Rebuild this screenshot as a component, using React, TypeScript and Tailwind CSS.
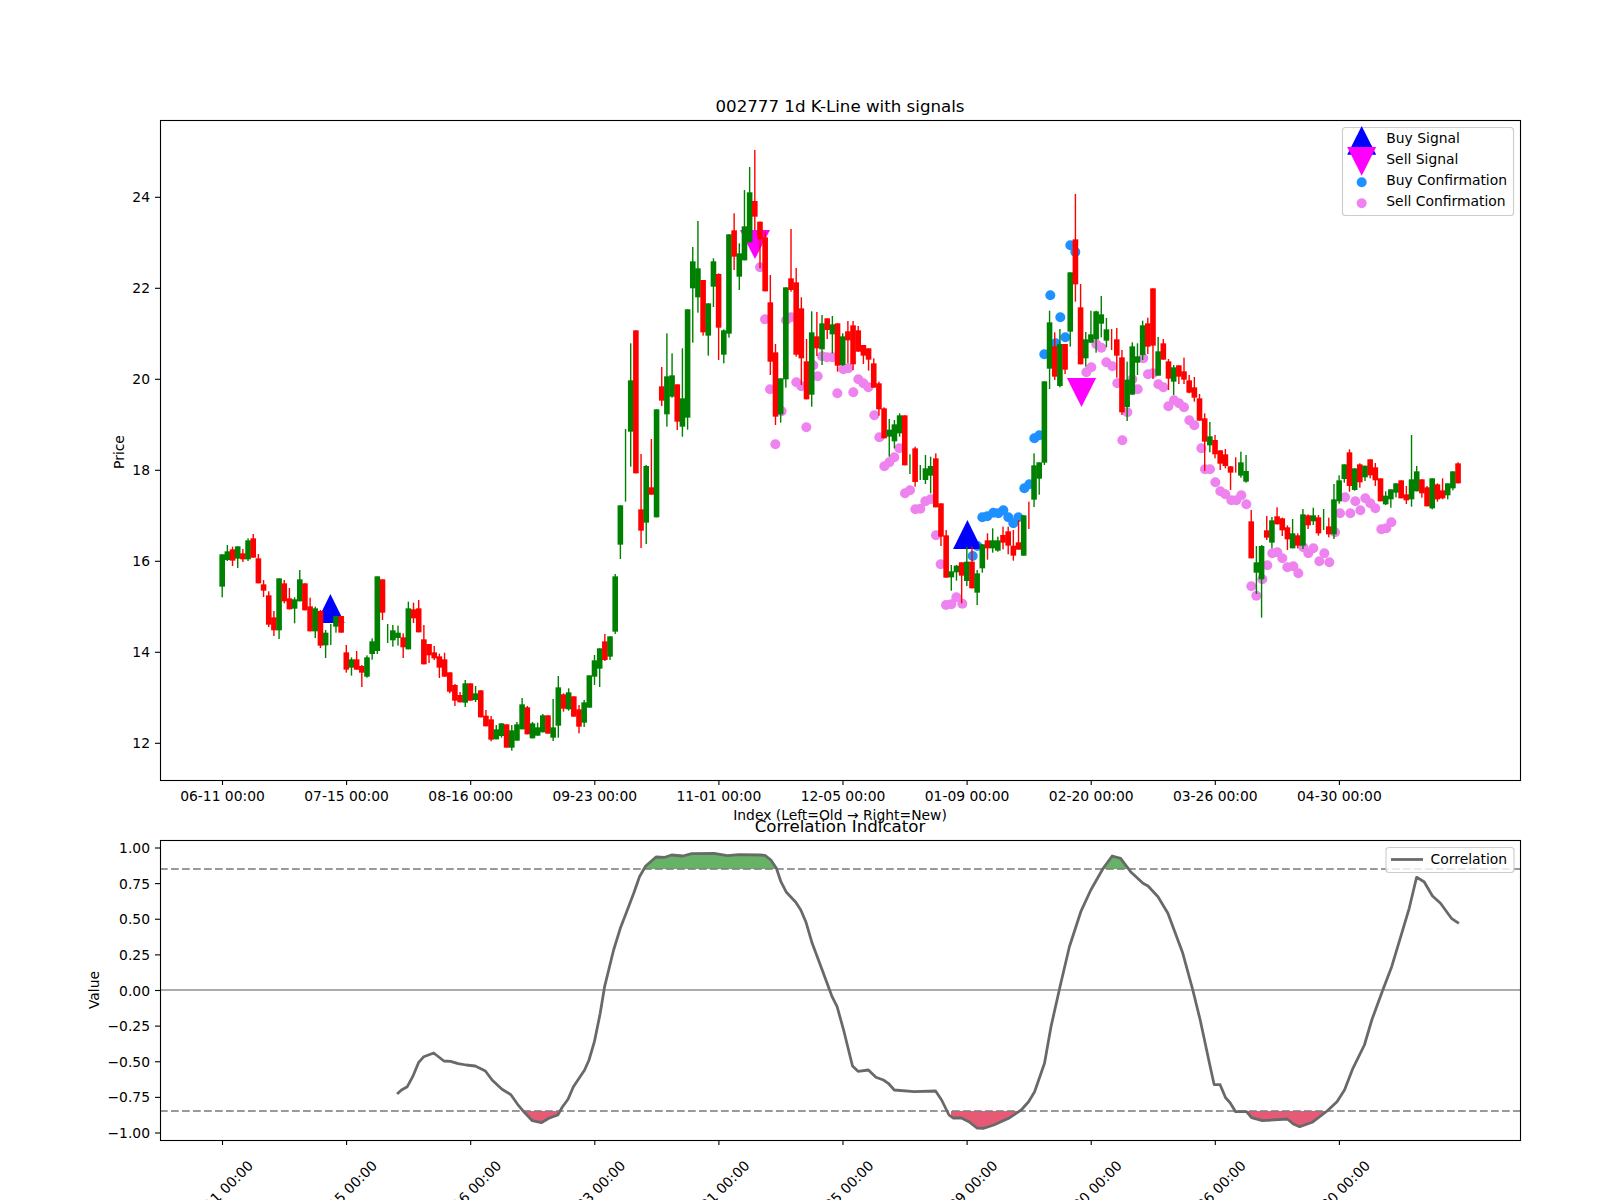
const S1 = `G 223 223 320 352;G 195 214 240 243;R 200 208 242 258;G 199 199 236 264;R 207 220 238 246;G 175 181 238 243;R 162 175 233 233;R 222 235 310 310;R 300 313 332 351;R 334 346 434 441;R 393 412 451 468;G 295 295 451 477;R 300 310 364 370;R 324 355 388 388;G 352 358 386 430;G 270 298 364 364;R 310 310 391 391;R 353 379 454 454;G 380 385 454 474;R 390 393 497 504;G 450 458 496 534;g 432 0 0 495;G 408 408 440 458;R 408 408 458 458;R 495 517 569 578;G 532 538 563 587;R 513 538 569 569;R 555 558 578 621;G 526 532 590 593;G 475 484 522 539;G 289 289 513 522;R 298 298 398 420;g 432 0 0 489;G 435 451 481 500;G 437 458 474 497;R 460 472 502 534;G 365 385 508 508;R 368 388 415 429;R 360 385 457 457;R 435 478 553 553;R 492 492 526 549;R 498 517 535 540;R 521 529 563 594;R 518 538 590 590;R 577 577 635 640;R 612 615 662 678;R 636 645 667 667;G 600 610 668 681`;
const S2 = `R 610 610 662 662;G 618 640 660 666;R 631 631 712 712;R 690 707 739 739;R 708 718 779 784;G 735 748 778 778;G 730 730 768 773;R 733 733 803 803;G 735 751 803 812;G 726 733 782 782;G 654 673 748 748;R 678 682 763 763;G 726 730 775 775;G 728 742 767 767;G 702 706 757 757;R 706 706 761 761;G 657 742 773 783;G 588 622 737 773;R 640 643 686 695;G 625 637 688 692;R 649 649 710 710;R 675 688 740 760;G 660 667 728 741;G 586 586 683 683;G 525 541 590 615;G 505 505 566 621;R 462 484 540 543;G 469 469 530 540;G 282 289 455 462;G 76 76 194 237`;
const S3 = `g 897 0 0 1115;G 640 751 905 1010;R 601 601 1030 1030;R 972 1138 1202 1254;G 1005 1008 1178 1242;R 927 1072 1094 1094;G 838 838 1162 1162;R 711 769 812 828;G 610 739 853 890;G 670 736 800 803;R 763 763 875 900;G 655 805 890 920;G 538 538 863 899;G 351 394 475 638;G 273 415 502 548;R 450 450 607 617;G 520 520 617 677;G 385 394 470 531;R 430 432 593 690;G 598 601 674 700;G 313 313 611 623;R 250 301 380 420;G 340 370 440 480;G 180 289 391 391;G 111 187 337 337;R 60 213 260 300;R 275 275 328 415;R 305 322 484 484;R 435 517 695 735;R 642 667 860 885;G 745 745 853 878;G 472 472 748 773;R 297 445 480 485;R 414 457 674 680;R 502 535 685 765;R 627 694 808 808;G 544 607 794 830;R 546 619 655 678;G 555 580 658 705;R 565 565 600 627;G 558 583 613 670;R 580 580 707 725;G 610 619 705 708;R 573 604 631 700;R 573 586 703 720;R 588 601 665 665;R 645 645 677 702;R 654 655 689 722;R 685 700 773 773;R 755 760 838 857;R 832 835 925 925;G 867 899 920 980;G 870 883 934 955;G 850 856 910 920;R 856 856 1006 1006`;
const S4 = `g 403 0 0 462;R 380 385 486 500;g 435 0 0 480;G 405 445 480 492;G 410 438 467 520;R 400 415 562 562;R 550 550 650 678;R 630 646 773 773;G 735 754 772 812;G 735 737 757 782;R 727 727 767 850;G 680 725 783 798;R 680 725 805 805;G 750 760 818 855;G 672 673 745 758;R 640 661 685 719;G 625 661 685 698;G 650 661 692 695;R 620 645 668 688;R 620 634 677 703;R 630 677 707 722;R 600 667 689 689;G 586 586 707 707;r 545 0 0 627;G 400 436 539 561;G 427 427 476 524`;
const S5 = `G 604 604 848 855;G 392 427 566 627;R 457 499 590 600;G 447 492 618 622;R 492 492 569 582;G 277 277 455 500;R 42 178 313 365;R 312 382 553 553;G 456 478 535 560;G 392 463 488 488;G 392 394 478 518;G 348 403 431 472;G 414 448 482 502;r 447 0 0 510;R 444 478 527 593;R 510 532 697 705;G 545 599 681 723;G 487 499 644 644;G 490 529 548 585;G 422 436 525 540;R 413 430 500 522;R 325 325 497 597;G 471 514 587 587;R 477 490 539 539;R 537 544 596 630;G 555 562 605 645;R 556 556 590 612;R 533 574 599 612;R 585 601 638 640;R 591 622 653 665;R 642 655 722 722`;
const S6 = `R 40 55 125 213;G 66 109 136 157;R 105 120 163 175;R 151 151 191 210;R 147 163 198 205;R 198 199 218 270;r 172 0 0 218;G 155 187 227 233;G 165 213 245 248;R 330 364 475 475;G 438 487 518 582;G 435 438 538 653;R 348 391 413 420;G 351 361 428 445;R 322 349 373 373;R 353 355 391 408;R 376 382 418 450;G 357 400 445 445;R 400 406 437 445;G 327 343 437 447;R 343 346 376 387;G 323 346 364 375;R 345 352 400 407;g 327 0 0 390;R 353 379 403 412;G 252 298 403 417;G 226 241 304 311;G 193 193 237 248;R 148 157 258 275;G 205 205 270 272;R 190 193 247 263;G 197 197 232 243;R 178 178 226 235;R 189 202 241 258;R 235 235 304 304;G 274 287 313 315;G 268 268 298 323;G 250 250 278 292;R 241 241 295 295;R 258 283 301 312;G 105 238 298 320;G 198 214 274 274;R 238 238 280 293;R 258 262 319 319;G 235 235 325 328;R 250 253 298 305;R 235 271 295 298;G 250 250 286 298;G 214 214 265 271;R 187 190 250 250`;

type Candle = { x: number; up: boolean; body: boolean; wt: number; bt: number; bb: number; wb: number };
const candles: Candle[] = [];
([[S1, 480], [S2, 480], [S3, 130], [S4, 320], [S5, 180], [S6, 400]] as [string, number][]).forEach(([s, y0]) => {
  s.split(";").forEach((row) => {
    const [c, a, b, d, e] = row.split(" ");
    const i = candles.length;
    const y = (v: string) => y0 + Number(v) / 3;
    candles.push({
      x: 222.2 + 5.171 * i,
      up: c.toLowerCase() === "g",
      body: c === "G" || c === "R",
      wt: y(a),
      bt: y(b),
      bb: y(d),
      wb: y(e),
    });
  });
});

const dots = (ox: number, oy: number, list: number[][]) => list.map(([x, y]) => [ox + x / 3, oy + y / 3]);
const violet = [
  ...dots(600, 130, [[480,412],[495,568],[510,778],[526,943],[545,844],[558,571],[573,562],[589,757],[604,769],[619,892],[640,706],[653,739],[666,679],[681,682],[697,682],[712,790],[730,718],[745,715],[760,787],[775,748],[790,760],[805,772],[823,856],[838,922],[853,1009],[868,997],[883,982],[898,955]]),
  ...dots(900, 320, [[15,520],[30,511],[46,568],[61,566],[76,544],[92,538],[108,646],[122,733],[138,855],[154,853],[169,832],[187,851]]),
  ...dots(1000, 180, [[259,577],[274,562],[289,493],[304,503],[319,547],[337,559],[352,610],[367,781],[382,697],[397,598],[413,628],[430,535],[444,583],[459,580],[475,613],[490,622],[505,679],[522,661],[537,670],[552,682],[568,721],[583,736]]),
  ...dots(1200, 400, [[4,145],[15,208],[30,208],[46,247],[61,274],[76,283],[94,301],[109,301],[124,286],[139,313],[154,559],[169,587],[187,538],[202,496],[217,460],[232,457],[247,475],[262,502],[280,499],[295,520],[310,442],[325,460],[340,445],[358,484],[373,460],[388,487],[405,397],[420,340],[435,292],[451,340],[466,304],[481,331],[496,295],[511,310],[526,325],[544,388],[559,385],[574,367]]),
];
const blue = [
  ...dots(900, 320, [[232,678],[218,708],[247,592],[262,589],[280,578],[295,580],[310,571],[325,592],[340,610],[355,592],[373,505],[388,493]]),
  ...dots(1000, 180, [[103,775],[118,766],[133,523],[167,490],[181,412],[196,472],[151,346],[211,196],[226,216]]),
];

const L8 = [[755,972],[765,960],[778,950],[790,920],[803,878],[815,860],[837,849],[860,873],[875,874],[892,881],[910,885],[930,888],[945,898],[953,903],[968,930],[990,958],[1010,974],[1025,1003],[1040,1027],[1058,1052],[1078,1058],[1095,1045],[1115,1035],[1125,1012],[1138,988],[1150,950],[1175,900],[1185,870],[1197,815],[1210,730],[1220,650],[1240,540],[1255,475],[1268,430],[1285,370],[1298,320],[1312,288],[1335,261],[1355,262],[1370,255],[1395,258],[1415,251],[1465,250],[1495,257],[1520,254]];
const L9 = [[0,255],[10,256],[22,270],[33,295],[42,335],[53,367],[72,397],[82,420],[92,455],[105,520],[125,600],[145,680],[155,710],[168,780],[186,888],[197,904],[218,900],[233,922],[248,930],[258,940],[270,960],[310,965],[353,963],[365,990],[380,1035],[388,1044],[405,1044],[420,1055],[436,1074],[450,1075],[470,1065],[500,1045],[525,1020],[540,995],[552,965],[572,880],[585,770],[603,650],[622,530],[645,425],[665,360],[690,295],[708,258],[725,265],[745,305],[770,340],[780,348],[800,380],[820,430],[850,550],[870,660],[885,750],[905,890],[913,944],[925,944],[936,983],[945,998],[956,1025],[978,1025],[988,1043],[1010,1052],[1060,1047],[1072,1062],[1085,1070],[1110,1057],[1140,1023],[1160,995],[1175,960],[1192,895],[1215,825],[1230,750],[1252,660],[1270,590],[1290,490],[1305,415],[1320,322],[1335,335],[1352,378],[1368,400],[1390,445],[1405,460]];
const line = [
  ...L8.map(([x, y]) => [60 + x / 2.24, 770 + y / 3]),
  ...L9.map(([x, y]) => [760 + x / 2.0103, 770 + y / 3]),
];
const linePts = line.map((p) => `${p[0].toFixed(1)},${p[1].toFixed(1)}`).join(" ");
const first = line[0][0].toFixed(1);
const last = line[line.length - 1][0].toFixed(1);

const tickX = [0, 1, 2, 3, 4, 5, 6, 7, 8, 9].map((k) => 222.5 + 124.1 * k);
const tickLabels = ["06-11 00:00", "07-15 00:00", "08-16 00:00", "09-23 00:00", "11-01 00:00", "12-05 00:00", "01-09 00:00", "02-20 00:00", "03-26 00:00", "04-30 00:00"];
const priceTicks = [24, 22, 20, 18, 16, 14, 12];
const valueTicks = ["1.00", "0.75", "0.50", "0.25", "0.00", "−0.25", "−0.50", "−0.75", "−1.00"];

export default function App() {
  return (
    <div className="w-[1600px] h-[1200px] bg-white overflow-hidden">
      <svg width="1600" height="1200" viewBox="0 0 1600 1200" className="block font-['DejaVu_Sans',sans-serif] text-[13.89px]">
        <defs>
          <clipPath id="greenClip"><rect x="160" y="840" width="1360" height="29" /></clipPath>
          <clipPath id="redClip">
            <rect x="500" y="1111" width="200" height="29" />
            <rect x="951" y="1111" width="200" height="29" />
            <rect x="1247" y="1111" width="200" height="29" />
          </clipPath>
        </defs>

        {/* main axes */}
        <text x="840" y="112" textAnchor="middle" className="text-[16.67px]">002777 1d K-Line with signals</text>
        {violet.map(([x, y], i) => <circle key={i} cx={x} cy={y} r="5" fill="#ee82ee" />)}
        {blue.map(([x, y], i) => <circle key={i} cx={x} cy={y} r="5" fill="#1e90ff" />)}
        <polygon points="330.4,594 344.7,623 316.1,623" fill="#0000ff" />
        <polygon points="967.4,520 981.7,549 953.1,549" fill="#0000ff" />
        <polygon points="740,230 770,230 755,259" fill="#ff00ff" />
        <polygon points="1066.9,378 1096.1,378 1081.5,407" fill="#ff00ff" />
        {candles.map((c, i) => (
          <g key={i} fill={c.up ? "#008000" : "#ff0000"}>
            <rect x={c.x - 0.7} y={c.wt} width="1.4" height={c.wb - c.wt} />
            {c.body && <rect x={c.x - 2.8} y={c.bt} width="5.6" height={c.bb - c.bt} />}
          </g>
        ))}
        <rect x="160.5" y="120.5" width="1360" height="660" fill="none" stroke="#000" strokeWidth="1.1" />
        {tickX.map((x, i) => (
          <g key={i}>
            <line x1={x} x2={x} y1="780" y2="785" stroke="#000" strokeWidth="1.1" />
            <text x={x} y="801" textAnchor="middle">{tickLabels[i]}</text>
            <line x1={x} x2={x} y1="1140" y2="1145" stroke="#000" strokeWidth="1.1" />
            <text x={x - 2} y="1193" textAnchor="middle" dominantBaseline="central" transform={`rotate(-45 ${x - 2} 1193)`}>{tickLabels[i]}</text>
          </g>
        ))}
        {priceTicks.map((p) => {
          const y = 743.3 - (p - 12) * 45.5;
          return (
            <g key={p}>
              <line x1="155" x2="160" y1={y} y2={y} stroke="#000" strokeWidth="1.1" />
              <text x="150" y={y + 5} textAnchor="end">{p}</text>
            </g>
          );
        })}
        <text x="124" y="452" textAnchor="middle" transform="rotate(-90 124 452)">Price</text>
        <text x="840" y="820" textAnchor="middle">Index (Left=Old → Right=New)</text>

        {/* main legend */}
        <rect x="1342.5" y="127.5" width="171" height="88" rx="3" fill="#ffffff" fillOpacity="0.8" stroke="#cccccc" strokeWidth="1.1" />
        <polygon points="1361.7,126 1376.2,154.7 1347.2,154.7" fill="#0000ff" />
        <polygon points="1347.2,147 1376.2,147 1361.7,175.7" fill="#ff00ff" />
        <circle cx="1361.7" cy="182.3" r="5" fill="#1e90ff" />
        <circle cx="1361.7" cy="203.3" r="5" fill="#ee82ee" />
        <text x="1386.3" y="143.3">Buy Signal</text>
        <text x="1386.3" y="164.3">Sell Signal</text>
        <text x="1386.3" y="185.3">Buy Confirmation</text>
        <text x="1386.3" y="206.3">Sell Confirmation</text>

        {/* lower axes */}
        <text x="840" y="832" textAnchor="middle" className="text-[16.67px]">Correlation Indicator</text>
        <polygon points={`${first},869 ${linePts} ${last},869`} fill="#008000" fillOpacity="0.6" clipPath="url(#greenClip)" />
        <polygon points={`${first},1111 ${linePts} ${last},1111`} fill="#dc143c" fillOpacity="0.7" clipPath="url(#redClip)" />
        <line x1="160" x2="1520" y1="869" y2="869" stroke="#808080" strokeOpacity="0.8" strokeWidth="2.08" strokeDasharray="7.7 3.3" />
        <line x1="160" x2="1520" y1="1111" y2="1111" stroke="#808080" strokeOpacity="0.8" strokeWidth="2.08" strokeDasharray="7.7 3.3" />
        <line x1="160" x2="1520" y1="990" y2="990" stroke="#808080" strokeOpacity="0.65" strokeWidth="2.08" />
        <polyline points={linePts} fill="none" stroke="#696969" strokeWidth="2.78" strokeLinejoin="round" />
        <rect x="160.5" y="840.5" width="1360" height="300" fill="none" stroke="#000" strokeWidth="1.1" />
        {valueTicks.map((v, i) => {
          const y = 848 + i * 35.625;
          return (
            <g key={v}>
              <line x1="155" x2="160" y1={y} y2={y} stroke="#000" strokeWidth="1.1" />
              <text x="150" y={y + 5} textAnchor="end">{v}</text>
            </g>
          );
        })}
        <text x="99" y="990" textAnchor="middle" transform="rotate(-90 99 990)">Value</text>

        {/* lower legend */}
        <rect x="1386" y="847.5" width="128" height="25" rx="3" fill="#ffffff" fillOpacity="0.8" stroke="#cccccc" strokeWidth="1.1" />
        <line x1="1391" x2="1423" y1="859.5" y2="859.5" stroke="#696969" strokeWidth="2.78" />
        <text x="1430.6" y="864">Correlation</text>
      </svg>
    </div>
  );
}
